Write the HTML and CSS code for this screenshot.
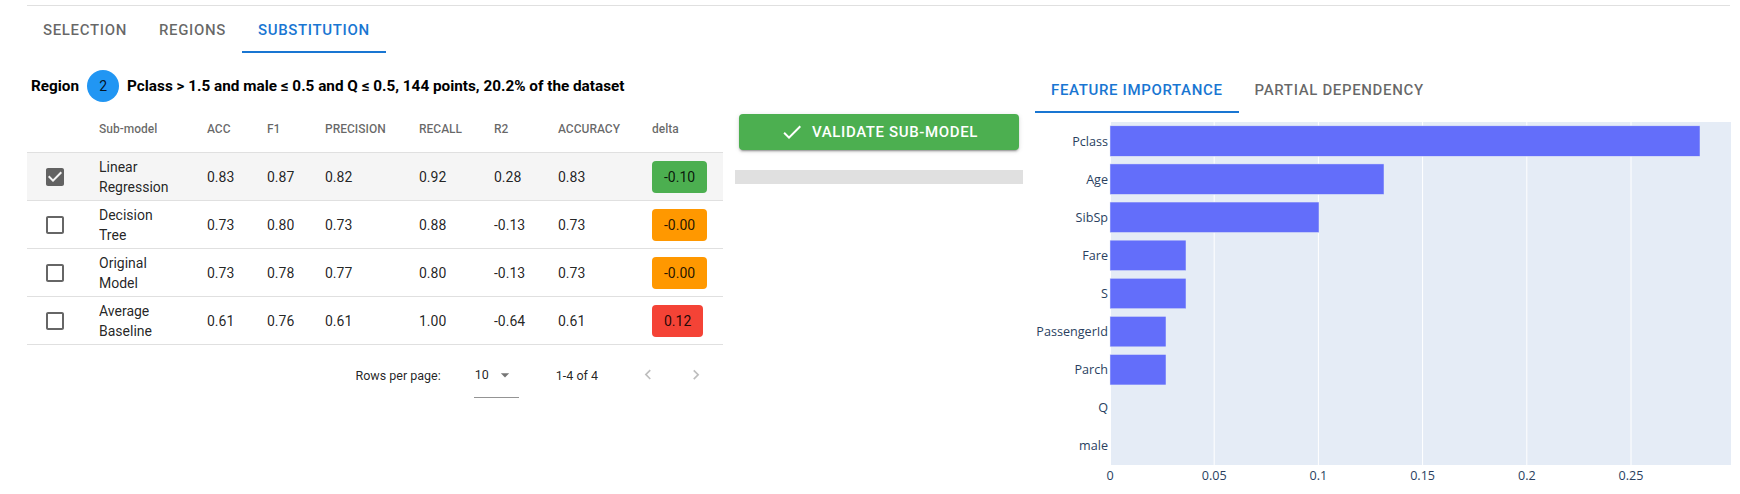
FILE: index.html
```html
<!DOCTYPE html>
<html>
<head>
<meta charset="utf-8">
<link rel="stylesheet" href="styles.css">
</head>
<body>
<div class="page">
  <div class="tabs main-tabs">
    <div class="tab">Selection</div>
    <div class="tab">Regions</div>
    <div class="tab active">Substitution</div>
  </div>
  <div class="content">
    <div class="left">
      <div class="region-line">
        <span class="region-label">Region</span>
        <span class="region-badge">2</span>
        <span class="region-rule">Pclass &gt; 1.5 and male ≤ 0.5 and Q ≤ 0.5, 144 points, 20.2% of the dataset</span>
      </div>
      <div class="left-body">
        <div class="table-wrap">
          <div class="row head">
            <div class="cell"></div>
            <div class="cell">Sub-model</div>
            <div class="cell">ACC</div>
            <div class="cell">F1</div>
            <div class="cell">PRECISION</div>
            <div class="cell">RECALL</div>
            <div class="cell">R2</div>
            <div class="cell">ACCURACY</div>
            <div class="cell">delta</div>
          </div>
          <div class="row selected">
            <div class="cell check"><svg viewBox="0 0 24 24" width="24" height="24"><path d="M19 3H5c-1.11 0-2 .9-2 2v14c0 1.1.89 2 2 2h14c1.11 0 2-.9 2-2V5c0-1.1-.89-2-2-2zm-9 14l-5-5 1.41-1.41L10 14.17l7.59-7.59L19 8l-9 9z"/></svg></div>
            <div class="cell name">Linear Regression</div>
            <div class="cell">0.83</div>
            <div class="cell">0.87</div>
            <div class="cell">0.82</div>
            <div class="cell">0.92</div>
            <div class="cell">0.28</div>
            <div class="cell">0.83</div>
            <div class="cell"><span class="delta green">-0.10</span></div>
          </div>
          <div class="row">
            <div class="cell check"><svg viewBox="0 0 24 24" width="24" height="24"><path d="M19 5v14H5V5h14m0-2H5c-1.1 0-2 .9-2 2v14c0 1.1.9 2 2 2h14c1.1 0 2-.9 2-2V5c0-1.1-.9-2-2-2z"/></svg></div>
            <div class="cell name">Decision Tree</div>
            <div class="cell">0.73</div>
            <div class="cell">0.80</div>
            <div class="cell">0.73</div>
            <div class="cell">0.88</div>
            <div class="cell">-0.13</div>
            <div class="cell">0.73</div>
            <div class="cell"><span class="delta orange">-0.00</span></div>
          </div>
          <div class="row">
            <div class="cell check"><svg viewBox="0 0 24 24" width="24" height="24"><path d="M19 5v14H5V5h14m0-2H5c-1.1 0-2 .9-2 2v14c0 1.1.9 2 2 2h14c1.1 0 2-.9 2-2V5c0-1.1-.9-2-2-2z"/></svg></div>
            <div class="cell name">Original Model</div>
            <div class="cell">0.73</div>
            <div class="cell">0.78</div>
            <div class="cell">0.77</div>
            <div class="cell">0.80</div>
            <div class="cell">-0.13</div>
            <div class="cell">0.73</div>
            <div class="cell"><span class="delta orange">-0.00</span></div>
          </div>
          <div class="row">
            <div class="cell check"><svg viewBox="0 0 24 24" width="24" height="24"><path d="M19 5v14H5V5h14m0-2H5c-1.1 0-2 .9-2 2v14c0 1.1.9 2 2 2h14c1.1 0 2-.9 2-2V5c0-1.1-.9-2-2-2z"/></svg></div>
            <div class="cell name">Average Baseline</div>
            <div class="cell">0.61</div>
            <div class="cell">0.76</div>
            <div class="cell">0.61</div>
            <div class="cell">1.00</div>
            <div class="cell">-0.64</div>
            <div class="cell">0.61</div>
            <div class="cell"><span class="delta red">0.12</span></div>
          </div>
          <div class="pagination">
            <span class="pg-label">Rows per page:</span>
            <span class="pg-select"><span>10</span><svg viewBox="0 0 24 24" width="20" height="20"><path d="M7 10l5 5 5-5z"/></svg></span>
            <span class="pg-rows">1-4 of 4</span>
            <span class="pg-actions">
              <span class="pg-btn"><svg viewBox="0 0 24 24" width="20" height="20"><path d="M15.41 16.09l-4.59-4.59 4.59-4.59L14 5.5l-6 6 6 6z"/></svg></span>
              <span class="pg-btn"><svg viewBox="0 0 24 24" width="20" height="20"><path d="M8.59 16.34l4.58-4.59-4.58-4.59L10 5.75l6 6-6 6z"/></svg></span>
            </span>
          </div>
        </div>
        <div class="side">
          <div class="validate-btn">
            <svg viewBox="0 0 24 24" width="24" height="24"><path d="M9 16.17L4.83 12l-1.42 1.41L9 19 21 7l-1.41-1.41z"/></svg>
            <span>Validate sub-model</span>
          </div>
          <div class="gray-bar"></div>
        </div>
      </div>
    </div>
    <div class="right">
      <div class="tabs sub-tabs">
        <div class="tab active">Feature importance</div>
        <div class="tab">Partial dependency</div>
      </div>
      <svg class="chart" width="696" height="381" viewBox="0 0 696 381">
        <rect x="75" y="9" width="621" height="343" fill="#e5ecf6"/>
        <g stroke="#ffffff" stroke-width="1">
          <line x1="179.2" y1="9" x2="179.2" y2="352"/>
          <line x1="283.4" y1="9" x2="283.4" y2="352"/>
          <line x1="387.6" y1="9" x2="387.6" y2="352"/>
          <line x1="491.8" y1="9" x2="491.8" y2="352"/>
          <line x1="596" y1="9" x2="596" y2="352"/>
        </g>
        <line x1="75" y1="9" x2="75" y2="352" stroke="#ffffff" stroke-width="2"/>
        <g fill="#636efa" stroke="#e5ecf6" stroke-width="0.5">
          <rect x="75" y="12.81" width="590" height="30.49"/>
          <rect x="75" y="50.92" width="274" height="30.49"/>
          <rect x="75" y="89.03" width="209" height="30.49"/>
          <rect x="75" y="127.14" width="76" height="30.49"/>
          <rect x="75" y="165.25" width="76" height="30.49"/>
          <rect x="75" y="203.36" width="56" height="30.49"/>
          <rect x="75" y="241.47" width="56" height="30.49"/>
        </g>
        <g class="ylab" text-anchor="end">
          <text x="73" y="32.5">Pclass</text>
          <text x="73" y="70.6">Age</text>
          <text x="73" y="108.7">SibSp</text>
          <text x="73" y="146.8">Fare</text>
          <text x="73" y="184.9">S</text>
          <text x="73" y="223">PassengerId</text>
          <text x="73" y="261.1">Parch</text>
          <text x="73" y="299.3">Q</text>
          <text x="73" y="337.4">male</text>
        </g>
        <g class="xlab" text-anchor="middle">
          <text x="75" y="367">0</text>
          <text x="179.2" y="367">0.05</text>
          <text x="283.4" y="367">0.1</text>
          <text x="387.6" y="367">0.15</text>
          <text x="491.8" y="367">0.2</text>
          <text x="596" y="367">0.25</text>
        </g>
      </svg>
    </div>
  </div>
</div>
</body>
</html>
```

FILE: styles.css
```css
* { box-sizing: border-box; }

body {
  margin: 0;
  background: #ffffff;
  font-family: Roboto, "Liberation Sans", sans-serif;
  color: rgba(0, 0, 0, 0.87);
}

.page {
  margin: 5px 10px 0 27px;
  border-top: 1px solid #e0e0e0;
}

/* Tabs */
.tabs {
  display: flex;
  height: 47px;
}

.tab {
  position: relative;
  display: flex;
  align-items: center;
  padding: 0 16px;
  font-size: 15px;
  font-weight: 500;
  letter-spacing: 0.65px;
  text-transform: uppercase;
  color: rgba(0, 0, 0, 0.6);
  white-space: nowrap;
}

.tab.active {
  color: #1976d2;
}

.tab.active::after {
  content: "";
  position: absolute;
  left: 0;
  right: 0;
  bottom: 0;
  height: 2px;
  background: #1976d2;
}

/* Layout */
.content {
  display: flex;
  align-items: flex-start;
}

.left {
  width: 996px;
  flex: none;
}

.right {
  margin-left: 12px;
  flex: 1;
}

.sub-tabs {
  margin-top: 13px;
}

.chart {
  display: block;
  overflow: visible;
}

.chart text {
  font-family: "Open Sans", Verdana, Arial, sans-serif;
  font-size: 12.6px;
  fill: #2a3f5f;
}

/* Region line */
.region-line {
  display: flex;
  align-items: center;
  height: 32px;
  margin-top: 17px;
  padding-left: 4px;
  font-size: 15.3px;
  font-weight: 700;
  color: #000;
}

.region-badge {
  width: 32px;
  height: 32px;
  margin: 0 8px;
  border-radius: 50%;
  background: #2196f3;
  display: flex;
  align-items: center;
  justify-content: center;
  font-size: 14px;
  font-weight: 400;
  color: rgba(0, 0, 0, 0.87);
}

.left-body {
  display: flex;
  align-items: flex-start;
  margin-top: 3px;
}

/* Table */
.table-wrap {
  width: 696px;
  flex: none;
}

.row {
  display: grid;
  grid-template-columns: 56px 108px 60px 58px 94px 75px 64px 94px 87px;
  height: 48px;
  border-bottom: 1px solid #e0e0e0;
  font-size: 14px;
  line-height: 20px;
}

.row.selected {
  background: #f5f5f5;
}

.cell {
  display: flex;
  align-items: center;
  padding: 0 16px;
}

.row.head .cell {
  font-size: 12px;
  font-weight: 500;
  color: rgba(0, 0, 0, 0.6);
}

.cell.check {
  padding: 0;
  justify-content: center;
}

.cell.check svg {
  fill: rgba(0, 0, 0, 0.6);
}

.delta {
  display: inline-flex;
  align-items: center;
  height: 32px;
  padding: 0 12px;
  border-radius: 4px;
  color: rgba(0, 0, 0, 0.87);
}

.delta.green { background: #4caf50; }
.delta.orange { background: #ff9800; }
.delta.red { background: #f44336; }

/* Pagination */
.pagination {
  display: flex;
  align-items: center;
  justify-content: flex-end;
  height: 60px;
  padding-right: 3px;
  font-size: 12.5px;
  color: rgba(0, 0, 0, 0.87);
}

.pg-select {
  display: flex;
  align-items: center;
  justify-content: space-between;
  width: 45px;
  height: 31px;
  margin-left: 33px;
  margin-top: 14px;
  padding: 0 4px 14px 1px;
  border-bottom: 1px solid rgba(0, 0, 0, 0.42);
}

.pg-select svg {
  fill: rgba(0, 0, 0, 0.54);
}

.pg-rows {
  margin-left: 37px;
}

.pg-actions {
  display: flex;
  margin-left: 26px;
}

.pg-btn {
  width: 48px;
  height: 48px;
  display: flex;
  align-items: center;
  justify-content: center;
}

.pg-btn svg {
  fill: rgba(0, 0, 0, 0.26);
}

/* Side column */
.side {
  width: 288px;
  margin-left: 12px;
  flex: none;
}

.validate-btn {
  display: flex;
  align-items: center;
  justify-content: center;
  gap: 8px;
  height: 36px;
  margin: 9px 4px 0;
  border-radius: 4px;
  background: #4caf50;
  color: #ffffff;
  font-size: 15px;
  font-weight: 500;
  letter-spacing: 0.63px;
  text-transform: uppercase;
  box-shadow: 0 3px 1px -2px rgba(0, 0, 0, 0.2), 0 2px 2px 0 rgba(0, 0, 0, 0.14), 0 1px 5px 0 rgba(0, 0, 0, 0.12);
}

.validate-btn svg {
  fill: #ffffff;
}

.gray-bar {
  height: 14px;
  margin-top: 20px;
  background: #e0e0e0;
}
```
